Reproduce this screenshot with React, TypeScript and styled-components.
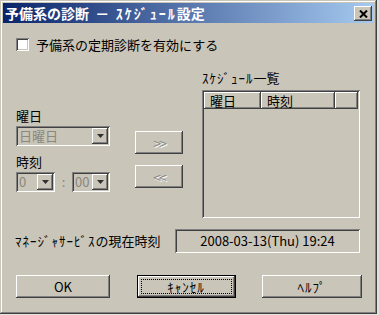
import styled, { createGlobalStyle } from "styled-components";

const face = "#C9C5B9";
const dim = "#8A877E";

const GlobalStyle = createGlobalStyle`
  html, body {
    margin: 0;
    padding: 0;
    background: #e4e2dc;
  }
  body {
    font-family: "Noto Sans CJK JP", "Noto Sans", sans-serif;
    font-size: 13px;
    color: #000;
  }
`;

const raised = `
  box-shadow: inset -1px -1px #404040, inset 1px 1px #fff, inset -2px -2px #808080;
`;

const sunken = `
  box-shadow: inset 1px 1px #808080, inset -1px -1px #fff, inset 2px 2px #404040, inset -2px -2px ${face};
`;

const Window = styled.div`
  width: 377px;
  height: 314px;
  box-sizing: border-box;
  padding: 3px;
  background: ${face};
  box-shadow: inset -1px -1px #404040, inset 1px 1px ${face}, inset -2px -2px #808080,
    inset 2px 2px #fff;
  display: flex;
  flex-direction: column;
`;

const TitleBar = styled.div`
  height: 20px;
  display: flex;
  align-items: center;
  padding: 0 2px;
  background: linear-gradient(to right, #0a246a, #a6caf0);
`;

const Title = styled.div`
  flex: 1;
  color: #fff;
  font-size: 14px;
  font-weight: 700;
  line-height: 20px;
  white-space: nowrap;
`;

const Kana = styled.span<{ $sp?: number }>`
  letter-spacing: ${(p) => p.$sp ?? 1}px;
`;

const CloseButton = styled.div`
  width: 18px;
  height: 15px;
  background: ${face};
  ${raised}
  display: flex;
  align-items: center;
  justify-content: center;
  margin-top: 1px;
`;

const Body = styled.div`
  padding: 0 12px 0 13px;
  display: flex;
  flex-direction: column;
`;

const CheckRow = styled.label`
  margin-top: 15px;
  height: 13px;
  display: flex;
  align-items: center;
  gap: 7px;
  line-height: 13px;
`;

const CheckBox = styled.span`
  width: 13px;
  height: 13px;
  box-sizing: border-box;
  background: #fff;
  ${sunken}
`;

const Middle = styled.div`
  margin-top: 19px;
  display: flex;
  align-items: flex-start;
`;

const LeftCol = styled.div`
  width: 94px;
  padding-top: 38px;
  display: flex;
  flex-direction: column;
`;

const FieldLabel = styled.div<{ $top?: number }>`
  line-height: 16px;
  height: 16px;
  margin-top: ${(p) => p.$top ?? 0}px;
  margin-bottom: 2px;
`;

const Combo = styled.div<{ $w: number }>`
  width: ${(p) => p.$w}px;
  height: 20px;
  box-sizing: border-box;
  padding: 2px;
  background: ${face};
  ${sunken}
  display: flex;
  align-items: center;
`;

const ComboText = styled.div`
  flex: 1;
  color: ${dim};
  padding-left: 1px;
  line-height: 16px;
  white-space: nowrap;
`;

const DropButton = styled.div`
  width: 16px;
  height: 16px;
  box-sizing: border-box;
  background: ${face};
  ${raised}
  display: flex;
  align-items: center;
  justify-content: center;
`;

const TimeFields = styled.div`
  display: flex;
  align-items: center;
  justify-content: space-between;
`;

const Colon = styled.span`
  color: ${dim};
  line-height: 16px;
`;

const MidCol = styled.div`
  width: 48px;
  margin-left: 25px;
  padding-top: 61px;
  display: flex;
  flex-direction: column;
  gap: 11px;
`;

const MoveButton = styled.div`
  height: 23px;
  box-sizing: border-box;
  background: ${face};
  ${raised}
  display: flex;
  align-items: center;
  justify-content: center;
  color: ${dim};
  text-shadow: 1px 1px #fff;
  letter-spacing: -2px;
  font-size: 14px;
`;

const RightCol = styled.div`
  width: 158px;
  margin-left: 19px;
  display: flex;
  flex-direction: column;
`;

const ListLabel = styled.div`
  line-height: 16px;
  height: 16px;
  margin-bottom: 4px;
`;

const ListBox = styled.div`
  height: 128px;
  box-sizing: border-box;
  padding: 2px;
  background: ${face};
  ${sunken}
`;

const HeaderRow = styled.div`
  height: 17px;
  display: flex;
`;

const HeaderCell = styled.div<{ $w?: number }>`
  ${(p) => (p.$w ? `width: ${p.$w}px;` : "flex: 1;")}
  box-sizing: border-box;
  padding-left: 6px;
  line-height: 17px;
  ${raised}
`;

const TimeRow = styled.div`
  margin-top: 11px;
  height: 24px;
  display: flex;
  align-items: center;
`;

const TimeLabel = styled.div`
  flex: 1;
  margin-left: -1px;
  line-height: 16px;
  white-space: nowrap;
`;

const TimeBox = styled.div`
  width: 185px;
  height: 24px;
  box-sizing: border-box;
  margin-right: 2px;
  ${sunken}
  display: flex;
  align-items: center;
  justify-content: center;
  line-height: 16px;
`;

const ButtonRow = styled.div`
  margin-top: 22px;
  display: flex;
  justify-content: space-between;
`;

const Button = styled.div<{ $w: number; $default?: boolean }>`
  width: ${(p) => p.$w}px;
  height: 23px;
  box-sizing: border-box;
  background: ${face};
  position: relative;
  display: flex;
  align-items: center;
  justify-content: center;
  line-height: 16px;
  ${(p) =>
    p.$default
      ? `box-shadow: inset 0 0 0 1px #000, inset -2px -2px #404040, inset 2px 2px #fff, inset -3px -3px #808080;`
      : raised}
`;

const FocusRing = styled.div`
  position: absolute;
  inset: 4px;
  border: 1px dotted #000;
  pointer-events: none;
`;

const DownArrow = () => (
  <svg width="7" height="4" viewBox="0 0 7 4">
    <path d="M0 0h7L3.5 4z" fill="#303030" />
  </svg>
);

export default function App() {
  return (
    <>
      <GlobalStyle />
      <Window>
        <TitleBar>
          <Title>
            予備系の診断 &nbsp;－&nbsp; <Kana $sp={2}>ｽｹｼﾞｭｰﾙ</Kana>設定
          </Title>
          <CloseButton>
            <svg width="9" height="8" viewBox="0 0 9 8">
              <path d="M1 0.5l7 7M8 0.5l-7 7" stroke="#000" strokeWidth="2" />
            </svg>
          </CloseButton>
        </TitleBar>
        <Body>
          <CheckRow>
            <CheckBox />
            予備系の定期診断を有効にする
          </CheckRow>
          <Middle>
            <LeftCol>
              <FieldLabel>曜日</FieldLabel>
              <Combo $w={94}>
                <ComboText>日曜日</ComboText>
                <DropButton>
                  <DownArrow />
                </DropButton>
              </Combo>
              <FieldLabel $top={8}>時刻</FieldLabel>
              <TimeFields>
                <Combo $w={39}>
                  <ComboText>0</ComboText>
                  <DropButton>
                    <DownArrow />
                  </DropButton>
                </Combo>
                <Colon>:</Colon>
                <Combo $w={38}>
                  <ComboText>00</ComboText>
                  <DropButton>
                    <DownArrow />
                  </DropButton>
                </Combo>
              </TimeFields>
            </LeftCol>
            <MidCol>
              <MoveButton>&gt;&gt;</MoveButton>
              <MoveButton>&lt;&lt;</MoveButton>
            </MidCol>
            <RightCol>
              <ListLabel>
                <Kana>ｽｹｼﾞｭｰﾙ</Kana>一覧
              </ListLabel>
              <ListBox>
                <HeaderRow>
                  <HeaderCell $w={57}>曜日</HeaderCell>
                  <HeaderCell $w={74}>時刻</HeaderCell>
                  <HeaderCell />
                </HeaderRow>
              </ListBox>
            </RightCol>
          </Middle>
          <TimeRow>
            <TimeLabel>
              <Kana>ﾏﾈｰｼﾞｬｻｰﾋﾞｽ</Kana>の現在時刻
            </TimeLabel>
            <TimeBox>2008-03-13(Thu) 19:24</TimeBox>
          </TimeRow>
          <ButtonRow>
            <Button $w={94}>OK</Button>
            <Button $w={99} $default>
              <Kana>ｷｬﾝｾﾙ</Kana>
              <FocusRing />
            </Button>
            <Button $w={100}>
              <Kana>ﾍﾙﾌﾟ</Kana>
            </Button>
          </ButtonRow>
        </Body>
      </Window>
    </>
  );
}
